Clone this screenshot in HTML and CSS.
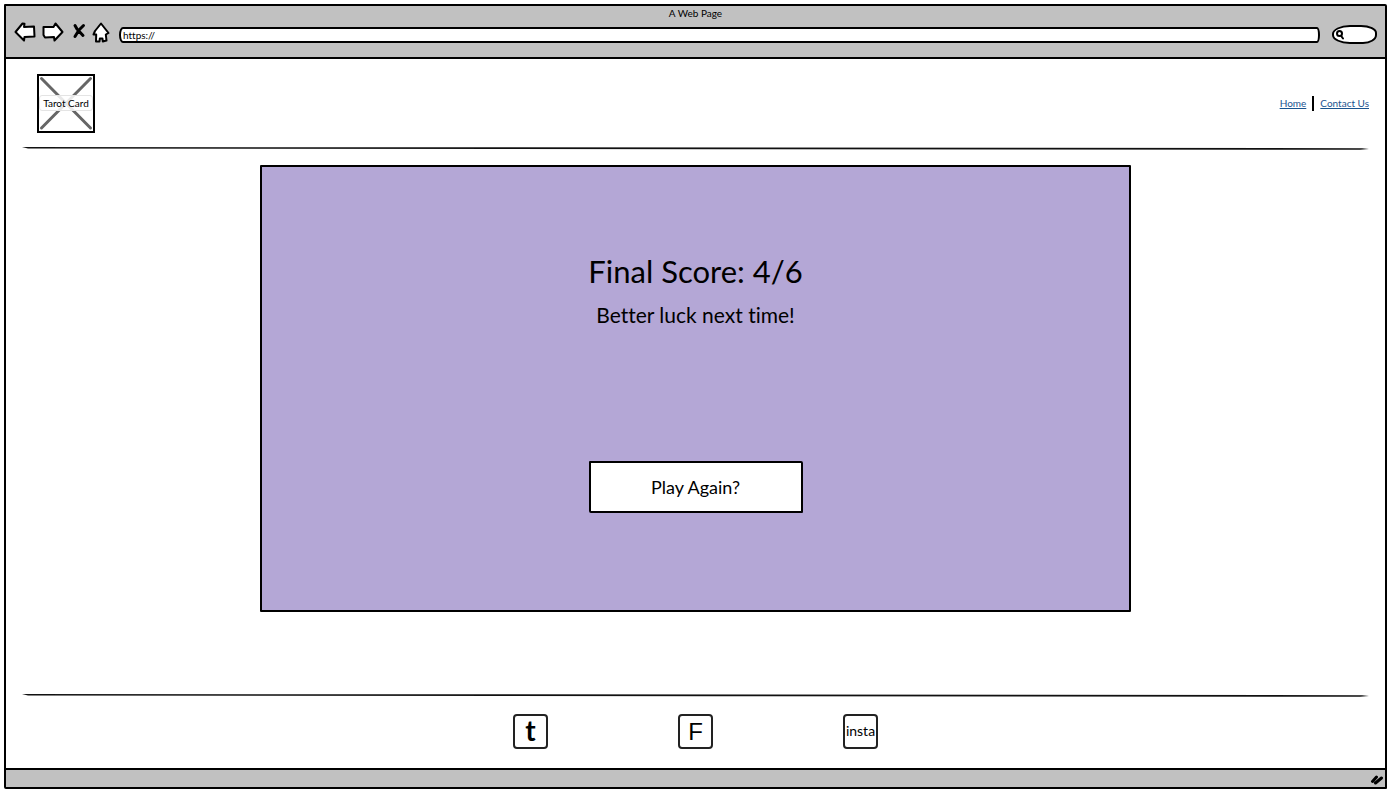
FILE: index.html
```html
<!DOCTYPE html>
<html lang="en">
<head>
<meta charset="utf-8">
<title>A Web Page</title>
<meta name="viewport" content="width=device-width, initial-scale=1">
<link rel="stylesheet" href="styles.css">
</head>
<body>
<div class="window">
  <div class="toolbar">
    <div class="window-title">A Web Page</div>
    <div class="controls">
      <button class="tool back" type="button" aria-label="Back">
        <svg width="22" height="20" viewBox="0 0 22 20"><path d="M1.500 10 8.500 1.500 10.500 1.800 10 5 20 4.500 20.500 14.500 10.500 15 10 18.500Z"/></svg>
      </button>
      <button class="tool forward" type="button" aria-label="Forward">
        <svg width="22" height="20" viewBox="0 0 22 20"><path d="M20.500 10 13.500 1.500 11.500 5 1.500 5 1.500 13 3 15.500 12 15 12.500 18.500Z"/></svg>
      </button>
      <button class="tool stop" type="button" aria-label="Stop">
        <svg width="14" height="18" viewBox="0 0 14 18"><path class="cross" d="M3 2.500 5 6 11 12.500M11.500 2.500 7 7 3 13.500"/></svg>
      </button>
      <button class="tool home" type="button" aria-label="Home page">
        <svg width="18" height="21" viewBox="0 0 18 21"><path d="M9 1.500 16.500 11 13.800 12.500 14.500 18.500 10.800 19.500 10.500 16.500 7.800 16.500 7.500 19.500 4 19.500 4.200 12.500 1.500 12.500 3 9Z"/></svg>
      </button>
      <input class="address" type="text" aria-label="Address" value="https://">
      <label class="search">
        <svg class="lens" width="10" height="12" viewBox="0 0 10 12"><circle cx="4.500" cy="4.500" r="2.500"/><path d="M6.200 7 8 9.500"/></svg>
        <input class="search-input" type="search" aria-label="Search">
      </label>
    </div>
  </div>

  <div class="page">
    <header class="header">
      <div class="logo">
        <svg class="logo-cross" viewBox="0 0 54 55" preserveAspectRatio="none"><path d="M2.500 2.500 51.500 52M51.500 2.500 2.500 52"/></svg>
        <span class="logo-label">Tarot Card</span>
      </div>
      <nav class="nav">
        <a class="nav-link" href="#">Home</a>
        <span class="nav-divider"></span>
        <a class="nav-link" href="#">Contact Us</a>
      </nav>
    </header>
    <svg class="rule" viewBox="0 0 1347 3" preserveAspectRatio="none"><path d="M0 0 300 .2 1000 .8 1340 1.200 1347 2 1338 2.800 700 2.200 6 1.600Z"/></svg>

    <main class="main">
      <section class="result">
        <h1 class="score">Final Score: 4/6</h1>
        <p class="message">Better luck next time!</p>
        <button class="play" type="button">Play Again?</button>
      </section>
    </main>

    <svg class="rule" viewBox="0 0 1347 3" preserveAspectRatio="none"><path d="M0 0 300 .2 1000 .8 1340 1.200 1347 2 1338 2.800 700 2.200 6 1.600Z"/></svg>
    <footer class="footer">
      <a class="social twitter" href="#">t</a>
      <a class="social facebook" href="#">F</a>
      <a class="social instagram" href="#">insta</a>
    </footer>
  </div>

  <div class="statusbar">
    <svg width="14" height="12" viewBox="0 0 14 12"><path class="grip" d="M2.500 8.500 6.500 4M5.500 10 11.500 5"/></svg>
  </div>
</div>
</body>
</html>
```
FILE: styles.css
```css
* {
  box-sizing: border-box;
}

body {
  margin: 0;
  background: #fff;
  color: #000;
  font-family: Lato, "Open Sans", sans-serif;
  font-size: 10px;
  font-variant-ligatures: none;
  line-height: 14px;
}

svg {
  display: block;
  fill: #fff;
  stroke: #000;
  stroke-width: 2;
  stroke-linejoin: round;
  stroke-linecap: round;
}

.window {
  display: flex;
  flex-direction: column;
  min-height: calc(100vh - 9px);
  margin: 4px 4px 5px;
  border: 2px solid #000;
  border-radius: 1px 2px 1px 2px;
}

.toolbar {
  height: 53px;
  background: #c1c1c1;
  border-bottom: 2px solid #000;
}

.window-title {
  text-align: center;
}

.controls {
  display: flex;
  align-items: center;
  gap: 6px;
  height: 24px;
  padding: 0 8px;
}

.tool {
  padding: 0;
  border: 0;
  background: none;
}

.stop {
  margin-left: 2px;
}

.cross {
  fill: none;
  stroke-width: 3;
}

.address {
  flex: 1;
  min-width: 0;
  height: 16px;
  margin: 5px 6px 0 3px;
  padding: 0 2px;
  border: 2px solid #000;
  border-radius: 4px 3px 3px 4px / 8px 8px 8px 8px;
  background: #fff;
  color: #000;
  font: inherit;
}

.search {
  display: flex;
  align-items: center;
  width: 45px;
  height: 19px;
  margin-top: 5px;
  padding-left: 1px;
  border: 2px solid #000;
  border-radius: 18px 16px 14px 18px / 9px 8px 9px 9px;
  background: #fff;
}

.lens {
  flex: none;
}

.search-input {
  flex: 1;
  min-width: 0;
  padding: 0;
  border: 0;
  outline: 0;
  background: none;
  font: inherit;
}

.page {
  display: flex;
  flex: 1;
  flex-direction: column;
  padding: 0 16px;
}

.header {
  display: flex;
  align-items: center;
  justify-content: space-between;
  height: 88px;
  padding-left: 15px;
}

.logo {
  display: grid;
  place-items: center;
  width: 58px;
  height: 59px;
  border: 2px solid #000;
}

.logo-cross,
.logo-label {
  grid-area: 1 / 1;
}

.logo-cross {
  width: 100%;
  height: 100%;
  stroke: #666;
  stroke-width: 3;
}

.logo-label {
  z-index: 1;
  padding: 0 3px;
  border: 1px solid #e4e4e4;
  border-radius: 3px;
  background: rgba(255, 255, 255, 0.85);
  white-space: nowrap;
}

.nav {
  display: flex;
  align-items: center;
  gap: 6px;
}

.nav-link {
  color: #1a5490;
}

.nav-divider {
  width: 2px;
  height: 15px;
  background: #000;
}

.rule {
  width: 100%;
  height: 3px;
  fill: #111;
  stroke: none;
}

.main {
  display: flex;
  flex: 1;
  flex-direction: column;
  align-items: center;
  padding: 15px 0 82px;
}

.result {
  display: flex;
  flex: 1;
  flex-direction: column;
  align-items: center;
  width: 871px;
  max-width: 100%;
  padding: 86px 20px 97px;
  border: 2px solid #000;
  border-radius: 1px;
  background: #b4a7d6;
}

.score {
  margin: 0;
  font-size: 31px;
  font-weight: 400;
  line-height: 36px;
}

.message {
  margin: 13px 0 auto;
  font-size: 21px;
  line-height: 26px;
}

.play {
  width: 214px;
  height: 52px;
  padding: 0;
  border: 2px solid #000;
  border-radius: 1px 2px 1px 2px;
  background: #fff;
  color: #000;
  font: 18px/24px Lato, "Open Sans", sans-serif;
}

.footer {
  display: flex;
  align-items: center;
  justify-content: center;
  gap: 130px;
  height: 71px;
  padding-bottom: 2px;
}

.social {
  display: flex;
  align-items: center;
  justify-content: center;
  width: 35px;
  height: 35px;
  border: 2px solid #222;
  border-radius: 4px;
  color: #000;
  text-decoration: none;
}

.twitter {
  padding-bottom: 4px;
  font-size: 28px;
  font-weight: 700;
}

.facebook {
  font-family: "Liberation Sans", sans-serif;
  font-size: 24px;
}

.instagram {
  padding-bottom: 2px;
  font-size: 14px;
}

.statusbar {
  display: flex;
  align-items: center;
  justify-content: flex-end;
  height: 19px;
  padding-right: 1px;
  border-top: 2px solid #000;
  background: #c1c1c1;
}

.grip {
  fill: none;
  stroke-width: 3;
}
```
